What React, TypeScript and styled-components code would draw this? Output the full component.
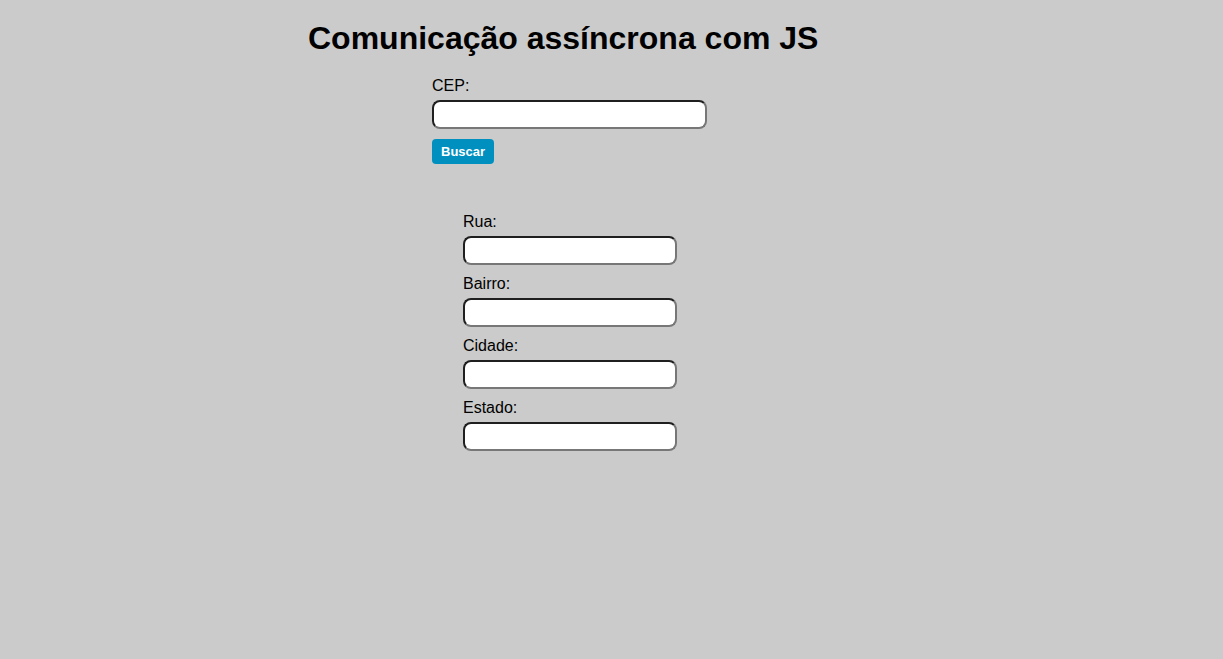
import React from "react";
import styled, { createGlobalStyle } from "styled-components";

const Global = createGlobalStyle`
  html, body { margin: 0; padding: 0; background: #cbcbcb; }
  body { font-family: "Liberation Sans", Arial, sans-serif; color: #000; }
`;

const Page = styled.main`
  min-height: 659px;
  padding: 20px 0 0 308px;
  box-sizing: border-box;
`;

const Title = styled.h1`
  margin: 0;
  font-size: 32px;
  font-weight: bold;
  line-height: 37px;
`;

const Form = styled.form`
  display: flex;
  flex-direction: column;
  align-items: flex-start;
  margin: 20px 0 0 124px;
`;

const Field = styled.div`
  display: flex;
  flex-direction: column;
  align-items: flex-start;
  gap: 5px;
`;

const Label = styled.label`
  font-size: 16px;
  line-height: 18px;
`;

const Input = styled.input<{ $w: number }>`
  box-sizing: border-box;
  width: ${(p) => p.$w}px;
  height: 29px;
  border-width: 2px;
  border-style: solid;
  border-color: #1f1f1f #777 #777 #1f1f1f;
  border-radius: 8px;
  background: #fff;
  font: 16px "Liberation Sans", Arial, sans-serif;
  padding: 2px 6px;
  outline: none;
`;

const Button = styled.button`
  margin-top: 10px;
  height: 25px;
  padding: 0 9px;
  border: none;
  border-radius: 4px;
  background: #0090c0;
  color: #fff;
  font: bold 13px "Liberation Sans", Arial, sans-serif;
  cursor: pointer;
`;

const Address = styled.div`
  display: flex;
  flex-direction: column;
  gap: 10px;
  margin: 49px 0 0 31px;
`;

const fields = ["Rua", "Bairro", "Cidade", "Estado"];

export default function App() {
  return (
    <>
      <Global />
      <Page>
        <Title>Comunicação assíncrona com JS</Title>
        <Form onSubmit={(e) => e.preventDefault()}>
          <Field>
            <Label htmlFor="cep">CEP:</Label>
            <Input id="cep" $w={275} />
          </Field>
          <Button type="submit">Buscar</Button>
          <Address>
            {fields.map((f) => (
              <Field key={f}>
                <Label htmlFor={f}>{f}:</Label>
                <Input id={f} $w={214} />
              </Field>
            ))}
          </Address>
        </Form>
      </Page>
    </>
  );
}
